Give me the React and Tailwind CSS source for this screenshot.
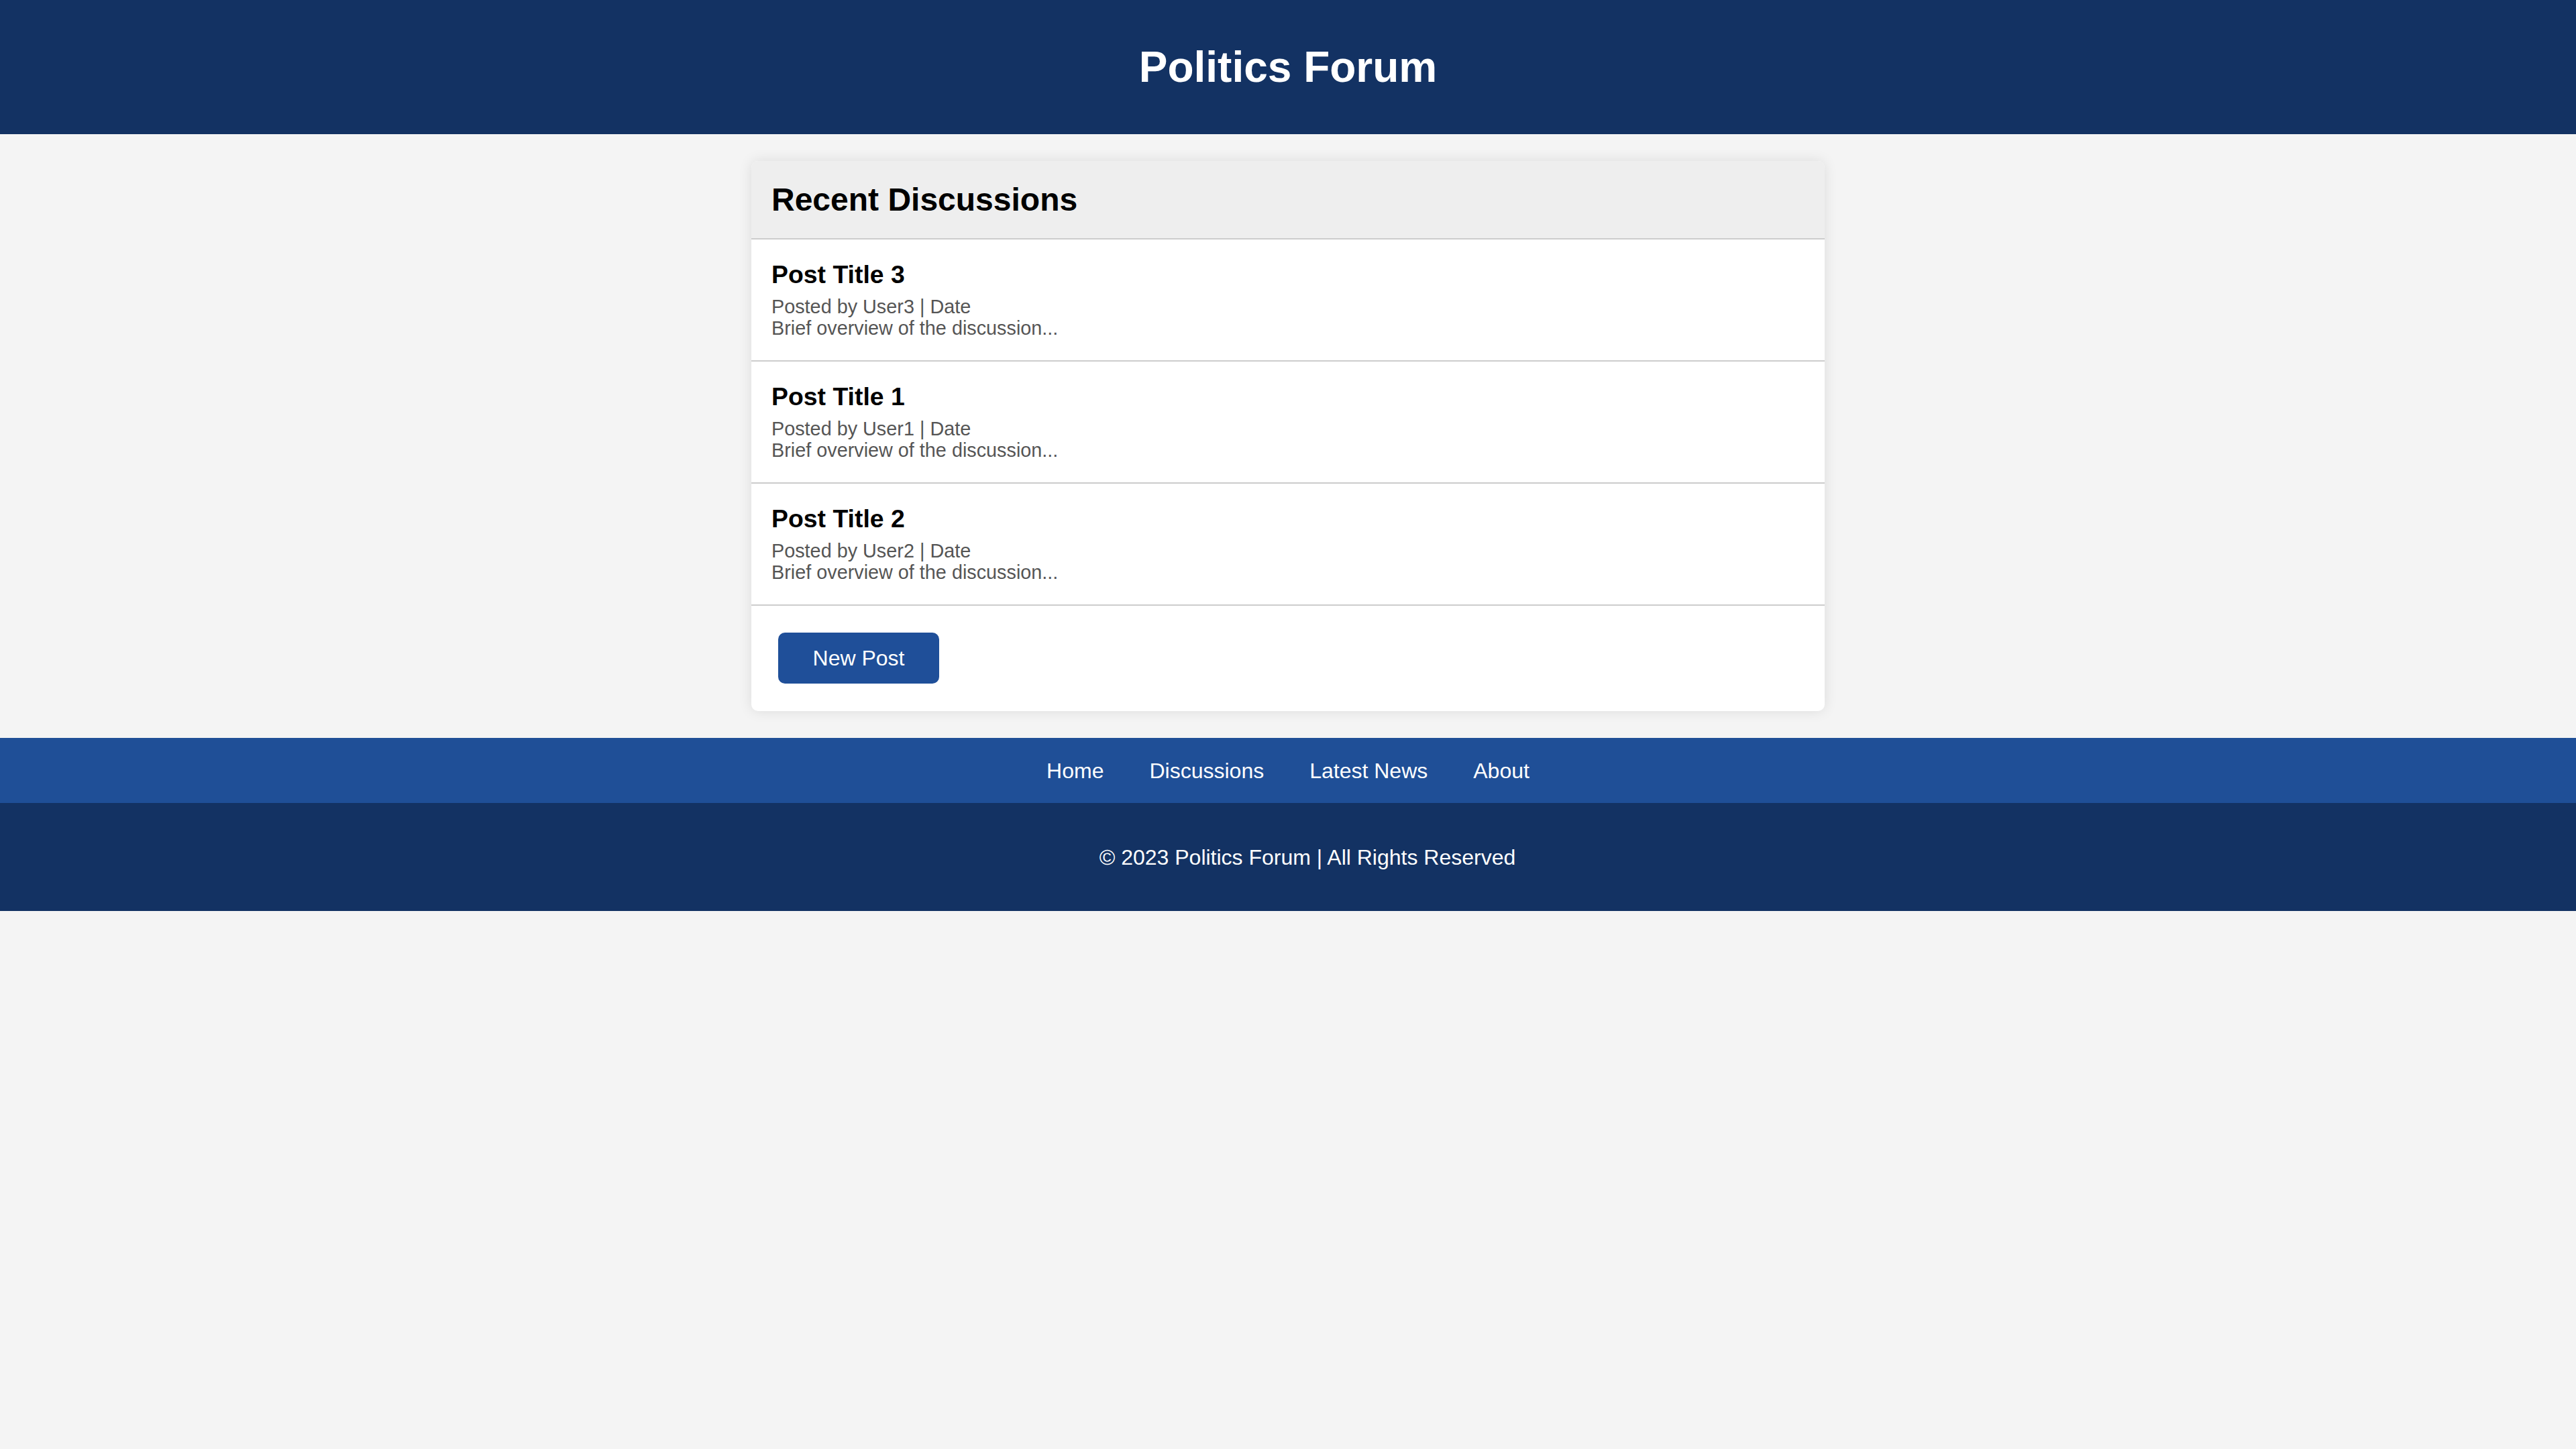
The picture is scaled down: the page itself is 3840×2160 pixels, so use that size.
import React from "react";

const posts = [
    { title: "Post Title 3", user: "User3" },
    { title: "Post Title 1", user: "User1" },
    { title: "Post Title 2", user: "User2" },
];

const links = ["Home", "Discussions", "Latest News", "About"];

function PostItem({ post }) {
    return (
        <div className="border-b-2 border-[#cccccc] px-[30px] pt-[31px] pb-[32px]">
            <h3 className="text-[37.4px] leading-[43px] font-bold text-black">{post.title}</h3>
            <p className="mt-[10px] text-[28.8px] leading-[32px] text-[#555555]">
                Posted by {post.user} | Date
                <br />
                Brief overview of the discussion...
            </p>
        </div>
    );
}

function App() {
    return (
        <div className="min-h-screen bg-[#f4f4f4] font-['Liberation_Sans',Arial,sans-serif]">
            <header className="h-[200px] bg-[#133263] flex items-center justify-center">
                <h1 className="text-[64px] font-bold text-white leading-none">Politics Forum</h1>
            </header>

            <main className="pt-[40px] pb-[40px] flex justify-center">
                <div className="w-[1600px] bg-white rounded-[10px] shadow-[0_0_20px_rgba(0,0,0,0.1)] overflow-hidden">
                    <div className="bg-[#eeeeee] border-b-2 border-[#cccccc] px-[30px] py-[30px]">
                        <h2 className="text-[48px] leading-[55px] font-bold text-black">Recent Discussions</h2>
                    </div>

                    {posts.map((post) => (
                        <PostItem key={post.title} post={post} />
                    ))}

                    <div className="pl-[40px] pt-[40px] pb-[41px]">
                        <button className="w-[240px] h-[76px] rounded-[10px] bg-[#1f4f99] text-white text-[32px]">
                            New Post
                        </button>
                    </div>
                </div>
            </main>

            {/* Nav */}
            <nav className="h-[97px] bg-[#1f4f97] flex items-center justify-center gap-[68px]">
                {links.map((link) => (
                    <a key={link} href="#" className="text-white text-[32px]">{link}</a>
                ))}
            </nav>

            <footer className="h-[161px] bg-[#133263] flex items-center justify-center pl-[58px]">
                <p className="text-white text-[32px]">© 2023 Politics Forum | All Rights Reserved</p>
            </footer>
        </div>
    );
}

export default App;
